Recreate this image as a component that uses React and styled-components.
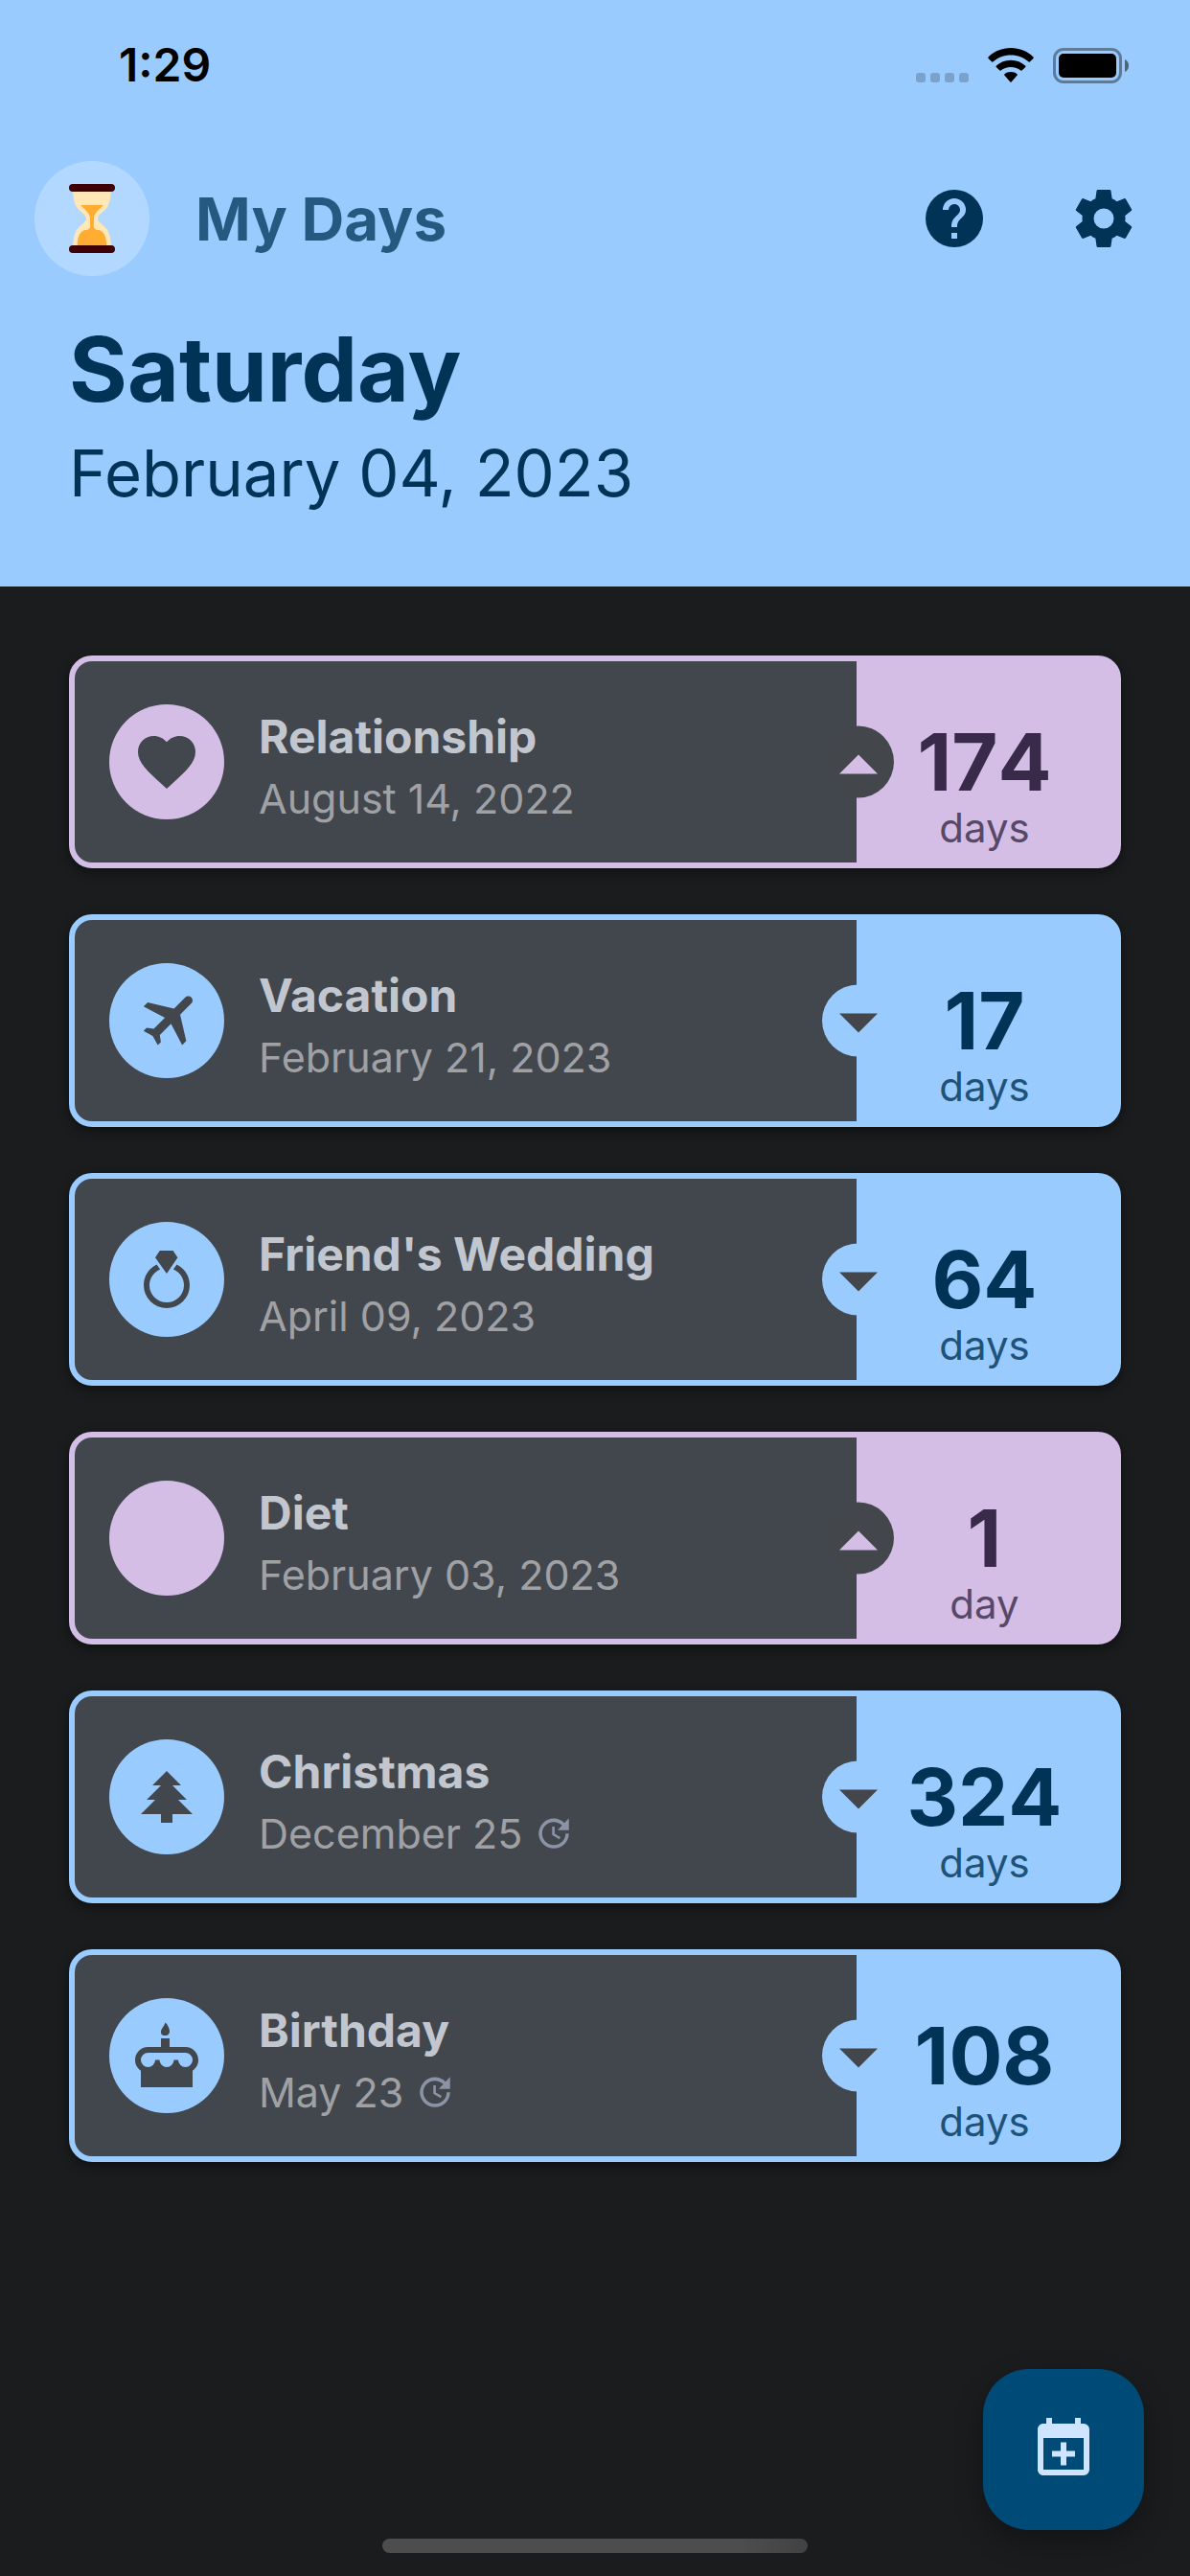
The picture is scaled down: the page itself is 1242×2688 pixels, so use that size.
import React from 'react';
import styled, { createGlobalStyle, css } from 'styled-components';

const colors = {
  background: '#1a1c1e',
  surface: '#42474e',
  notch: '#43474b',
  title: '#c2c7cf',
  muted: '#a0a1a4',
  repeat: '#8a94a6',
  fab: '#004a77',
  onFab: '#cfe4ff',
};

const tones = {
  future: { main: '#99cbff', strong: '#003355', soft: '#1f5278' },
  past: { main: '#d4bee6', strong: '#392a49', soft: '#584868' },
};

const paths = {
  help: 'M15.07,11.25L14.17,12.17C13.45,12.89 13,13.5 13,15H11V14.5C11,13.39 11.45,12.39 12.17,11.67L13.41,10.41C13.78,10.05 14,9.55 14,9C14,7.89 13.1,7 12,7A2,2 0 0,0 10,9H8A4,4 0 0,1 12,5A4,4 0 0,1 16,9C16,9.88 15.64,10.67 15.07,11.25M13,19H11V17H13M12,2A10,10 0 0,0 2,12A10,10 0 0,0 12,22A10,10 0 0,0 22,12C22,6.47 17.5,2 12,2Z',
  cog: 'M12,15.5A3.5,3.5 0 0,1 8.5,12A3.5,3.5 0 0,1 12,8.5A3.5,3.5 0 0,1 15.5,12A3.5,3.5 0 0,1 12,15.5M19.43,12.97C19.47,12.65 19.5,12.33 19.5,12C19.5,11.67 19.47,11.34 19.43,11L21.54,9.37C21.73,9.22 21.78,8.95 21.66,8.73L19.66,5.27C19.54,5.05 19.27,4.96 19.05,5.05L16.56,6.05C16.04,5.66 15.5,5.32 14.87,5.07L14.5,2.42C14.46,2.18 14.25,2 14,2H10C9.75,2 9.54,2.18 9.5,2.42L9.13,5.07C8.5,5.32 7.96,5.66 7.44,6.05L4.95,5.05C4.73,4.96 4.46,5.05 4.34,5.27L2.34,8.73C2.21,8.95 2.27,9.22 2.46,9.37L4.57,11C4.53,11.34 4.5,11.67 4.5,12C4.5,12.33 4.53,12.65 4.57,12.97L2.46,14.63C2.27,14.78 2.21,15.05 2.34,15.27L4.34,18.73C4.46,18.95 4.73,19.03 4.95,18.95L7.44,17.94C7.96,18.34 8.5,18.68 9.13,18.93L9.5,21.58C9.54,21.82 9.75,22 10,22H14C14.25,22 14.46,21.82 14.5,21.58L14.87,18.93C15.5,18.67 16.04,18.34 16.56,17.94L19.05,18.95C19.27,19.03 19.54,18.95 19.66,18.73L21.66,15.27C21.78,15.05 21.73,14.78 21.54,14.63L19.43,12.97Z',
  heart: 'M12,21.35L10.55,20.03C5.4,15.36 2,12.27 2,8.5C2,5.41 4.42,3 7.5,3C9.24,3 10.91,3.81 12,5.08C13.09,3.81 14.76,3 16.5,3C19.58,3 22,5.41 22,8.5C22,12.27 18.6,15.36 13.45,20.03L12,21.35Z',
  airplane: 'M20.56 3.91C21.15 4.5 21.15 5.45 20.56 6.03L16.67 9.92L18.79 19.11L17.38 20.53L13.5 13.1L9.6 17L9.96 19.47L8.89 20.53L7.13 17.35L3.94 15.58L5 14.5L7.5 14.87L11.37 11L3.94 7.09L5.36 5.68L14.55 7.8L18.44 3.91C19 3.33 20 3.33 20.56 3.91Z',
  ring: 'M12,10L8,4.4L9.6,2H14.2L15.8,4.4L12,10M15.5,6.8L14.3,8.5C16.5,9.4 18,11.5 18,14A6,6 0 0,1 12,20A6,6 0 0,1 6,14C6,11.5 7.6,9.4 9.7,8.5L8.5,6.8C5.8,8.1 4,10.8 4,14A8,8 0 0,0 12,22A8,8 0 0,0 20,14C20,10.8 18.2,8.1 15.5,6.8Z',
  tree: 'M10,21V18H3L8,13H5L10,8H7L12,3L17,8H14L19,13H16L21,18H14V21H10Z',
  cake: 'M11.5,0.5C12,0.75 13,2.4 13,3.5C13,4.6 12.33,5 11.5,5C10.67,5 10,4.85 10,3.75C10,2.65 11,2 11.5,0.5M18.5,9C21,9 23,11 23,13.5C23,15.06 22.21,16.43 21,17.24V23H12L3,23V17.24C1.79,16.43 1,15.06 1,13.5C1,11 3,9 5.5,9H10V6H13V9H18.5M12,16A2.5,2.5 0 0,0 14.5,13.5H16A2.5,2.5 0 0,0 18.5,16A2.5,2.5 0 0,0 21,13.5A2.5,2.5 0 0,0 18.5,11H5.5A2.5,2.5 0 0,0 3,13.5A2.5,2.5 0 0,0 5.5,16A2.5,2.5 0 0,0 8,13.5H9.5A2.5,2.5 0 0,0 12,16Z',
  update: 'M21,10.12H14.22L16.96,7.3C14.23,4.6 9.81,4.5 7.08,7.2C4.35,9.91 4.35,14.28 7.08,17C9.81,19.7 14.23,19.7 16.96,17C18.32,15.65 19,14.08 19,12.1H21C21,14.08 20.12,16.65 18.36,18.39C14.85,21.87 9.15,21.87 5.64,18.39C2.14,14.92 2.11,9.28 5.62,5.81C9.13,2.34 14.76,2.34 18.27,5.81L21,3V10.12M12.5,8V12.25L16,14.33L15.28,15.54L11,13V8H12.5Z',
  menuUp: 'M7,15L12,10L17,15H7Z',
  menuDown: 'M7,10L12,15L17,10H7Z',
  calendarPlus: 'M19,19V8H5V19M16,1H18V3H19A2,2 0 0,1 21,5V19A2,2 0 0,1 19,21H5C3.89,21 3,20.1 3,19V5C3,3.89 3.89,3 5,3H6V1H8V3H16V1M11,9.5H13V12.5H16V14.5H13V17.5H11V14.5H8V12.5H11V9.5Z',
};

const events = [
  { title: 'Relationship', date: 'August 14, 2022', count: 174, tone: 'past', icon: 'heart' },
  { title: 'Vacation', date: 'February 21, 2023', count: 17, tone: 'future', icon: 'airplane' },
  { title: "Friend's Wedding", date: 'April 09, 2023', count: 64, tone: 'future', icon: 'ring' },
  { title: 'Diet', date: 'February 03, 2023', count: 1, tone: 'past' },
  { title: 'Christmas', date: 'December 25', count: 324, tone: 'future', icon: 'tree', yearly: true },
  { title: 'Birthday', date: 'May 23', count: 108, tone: 'future', icon: 'cake', yearly: true },
];

const GlobalStyle = createGlobalStyle`
  *, *::before, *::after { box-sizing: border-box; }
  body {
    margin: 0;
    background: ${colors.background};
    font-family: Inter, "Liberation Sans", sans-serif;
  }
  h1, h2, p, ul { margin: 0; padding: 0; }
  button { font: inherit; color: inherit; border: 0; padding: 0; background: none; cursor: pointer; }
`;

const Screen = styled.div`
  position: relative;
  min-height: 100vh;
  display: flex;
  flex-direction: column;
`;

const Header = styled.header`
  background: ${tones.future.main};
  color: ${tones.future.strong};
`;

const StatusBar = styled.div`
  display: flex;
  align-items: center;
  justify-content: space-between;
  height: 132px;
  padding: 4px 64px 0 124px;
  color: #000;
`;

const Clock = styled.time`
  font-size: 48px;
  line-height: 60px;
  font-weight: 600;
`;

const StatusIcons = styled.div`
  display: flex;
  align-items: center;
  gap: 20px;
`;

const Signal = styled.div`
  display: flex;
  align-items: flex-end;
  gap: 5px;
  height: 36px;
`;

const SignalDot = styled.span`
  width: 10px;
  height: 10px;
  border-radius: 3px;
  background: rgba(0, 0, 0, 0.2);
`;

const AppBar = styled.div`
  display: flex;
  align-items: center;
  height: 192px;
  padding: 0 30px 0 36px;
`;

const Avatar = styled.div`
  display: grid;
  place-items: center;
  width: 120px;
  height: 120px;
  border-radius: 50%;
  background: rgba(255, 255, 255, 0.25);
`;

const AppTitle = styled.h1`
  flex: 1;
  padding: 2px 0 0 48px;
  font-size: 62px;
  line-height: 84px;
  font-weight: 700;
  opacity: 0.75;
`;

const Actions = styled.div`
  display: flex;
  gap: 36px;
`;

const IconButton = styled.button`
  display: grid;
  place-items: center;
  width: 120px;
  height: 120px;
  border-radius: 50%;
`;

const Today = styled.div`
  padding: 0 72px 70px;
`;

const Weekday = styled.h2`
  font-size: 93px;
  line-height: 122px;
  font-weight: 700;
`;

const TodayDate = styled.p`
  font-size: 67px;
  line-height: 96px;
`;

const Main = styled.main`
  flex: 1;
  padding: 72px;
`;

const EventList = styled.ul`
  display: flex;
  flex-direction: column;
  gap: 48px;
  list-style: none;
`;

const Card = styled.button`
  display: flex;
  width: 100%;
  height: 222px;
  border: 6px solid ${(p) => tones[p.$tone].main};
  border-radius: 24px;
  background: ${(p) => tones[p.$tone].main};
  text-align: left;
  box-shadow: 0 4px 12px rgba(0, 0, 0, 0.45);
`;

const Details = styled.span`
  flex: 1;
  align-self: stretch;
  display: flex;
  align-items: center;
  gap: 36px;
  padding-left: 36px;
  border-radius: 18px 0 0 18px;
  background: ${colors.surface};
`;

const Badge = styled.span`
  display: grid;
  place-items: center;
  width: 120px;
  height: 120px;
  border-radius: 50%;
  background: ${(p) => tones[p.$tone].main};
  color: ${colors.surface};
`;

const Labels = styled.span`
  display: flex;
  flex-direction: column;
  gap: 1px;
  padding-top: 9px;
`;

const EventTitle = styled.span`
  font-size: 48px;
  line-height: 66px;
  font-weight: 700;
  color: ${colors.title};
`;

const EventDate = styled.span`
  display: flex;
  align-items: center;
  gap: 12px;
  font-size: 43px;
  line-height: 60px;
  color: ${colors.muted};
`;

const Counter = styled.span`
  position: relative;
  align-self: stretch;
  display: flex;
  flex-direction: column;
  align-items: center;
  justify-content: flex-end;
  width: 270px;
  padding: 0 3px 12px 0;
`;

const Notch = styled.span`
  position: absolute;
  left: -36px;
  top: 50%;
  display: grid;
  place-content: center;
  width: 75px;
  height: 75px;
  border-radius: 50%;
  transform: translateY(-50%);
  ${(p) =>
    p.$tone === 'past'
      ? css`
          background: ${colors.notch};
          color: ${tones.past.main};
        `
      : css`
          background: ${tones.future.main};
          color: ${colors.notch};
        `}
`;

const Count = styled.span`
  font-size: 83px;
  line-height: 90px;
  font-weight: 700;
  font-kerning: none;
  color: ${(p) => tones[p.$tone].strong};
`;

const Unit = styled.span`
  font-size: 42px;
  line-height: 48px;
  color: ${(p) => tones[p.$tone].soft};
`;

const AddButton = styled.button`
  position: fixed;
  right: 48px;
  bottom: 48px;
  display: grid;
  place-items: center;
  width: 168px;
  height: 168px;
  border-radius: 48px;
  background: ${colors.fab};
  color: ${colors.onFab};
  box-shadow: 0 12px 30px rgba(0, 0, 0, 0.3);
`;

const Footer = styled.footer`
  display: flex;
  justify-content: center;
  padding-bottom: 24px;
`;

const HomeIndicator = styled.div`
  width: 444px;
  height: 15px;
  border-radius: 8px;
  background: linear-gradient(90deg, #4d4d4d 84%, #424242);
`;

const Glyph = styled.svg`
  display: block;
  flex: none;
  width: ${(p) => p.$size}px;
  height: ${(p) => p.$size}px;
  fill: currentColor;
`;

const Repeat = styled(Glyph)`
  color: ${colors.repeat};
`;

function Icon({ name, size = 72, as: Shape = Glyph }) {
  return (
    <Shape $size={size} viewBox="0 0 24 24" aria-hidden="true">
      <path d={paths[name]} />
    </Shape>
  );
}

function Hourglass() {
  return (
    <svg width="72" height="72" viewBox="0 0 36 36" aria-hidden="true">
      <path fill="#ffe8b6" d="M21 18c0-2.001 3.246-3.369 5-6 2-3 2-10 2-10H8s0 7 2 10c1.754 2.631 5 3.999 5 6s-3.246 3.369-5 6c-2 3-2 10-2 10h20s0-7-2-10c-1.754-2.631-5-3.999-5-6z" />
      <path fill="#ffac33" d="M20.999 24c-.999 0-2.057-1-2.057-2C19 20.287 19 19.154 19 18c0-3.22 3.034-4.561 4.9-7H12.1c1.865 2.439 4.9 3.78 4.9 7 0 1.155 0 2.289.058 4 0 1-1.058 2-2.058 2-3 0-4.6 3.4-4.6 8h15.2c0-4.600-1.600-8-4.601-8z" />
      <path fill="#3e0004" d="M30 34a2 2 0 0 1-2 2H8a2 2 0 0 1 0-4h20a2 2 0 0 1 2 2zm0-32a2 2 0 0 1-2 2H8a2 2 0 0 1 0-4h20a2 2 0 0 1 2 2z" />
    </svg>
  );
}

function Wifi() {
  return (
    <svg width="48" height="36" viewBox="0 0 48 36" aria-hidden="true">
      <path d="M24 0C33 0 41.500 3.500 47.500 9.500Q48 10.200 47.500 10.900L43.800 14.600Q43.300 15 42.700 14.600C37.500 10 31 7.500 24 7.500S10.500 10 5.300 14.600Q4.700 15 4.200 14.600L.5 10.900Q0 10.200 .5 9.500C6.500 3.500 15 0 24 0Z" />
      <path d="M24 12.800C29.900 12.800 35.200 15 39.300 18.700Q39.800 19.300 39.300 19.900L35.500 23.600Q35 24 34.400 23.600C31.500 21.200 28 19.900 24 19.900S16.500 21.200 13.600 23.600Q13 24 12.500 23.600L8.700 19.900Q8.200 19.300 8.700 18.700C12.800 15 18.100 12.800 24 12.800Z" />
      <path d="M24 25C26.600 25 28.900 25.800 30.700 27.400Q31.200 28 30.700 28.600L24.600 35.400Q24 36 23.400 35.400L17.300 28.600Q16.800 28 17.300 27.400C19.100 25.800 21.400 25 24 25Z" />
    </svg>
  );
}

function Battery() {
  return (
    <svg width="79" height="37" viewBox="0 0 79 37" aria-hidden="true">
      <rect x="1.500" y="1.500" width="69" height="34" rx="9.500" fill="none" stroke="#000" strokeOpacity="0.400" strokeWidth="3" />
      <rect x="6" y="6" width="60" height="25" rx="5" />
      <path d="M75 12C77.500 13 79 15.500 79 18.500S77.500 24 75 25Z" fillOpacity="0.500" />
    </svg>
  );
}

function EventCard({ event }) {
  const { title, date, count, tone, icon, yearly } = event;
  return (
    <Card type="button" $tone={tone}>
      <Details>
        <Badge $tone={tone}>{icon && <Icon name={icon} />}</Badge>
        <Labels>
          <EventTitle>{title}</EventTitle>
          <EventDate>
            {date}
            {yearly && <Icon name="update" size={42} as={Repeat} />}
          </EventDate>
        </Labels>
      </Details>
      <Counter>
        <Notch $tone={tone}>
          <Icon name={tone === 'past' ? 'menuUp' : 'menuDown'} size={96} />
        </Notch>
        <Count $tone={tone}>{count}</Count>
        <Unit $tone={tone}>{count === 1 ? 'day' : 'days'}</Unit>
      </Counter>
    </Card>
  );
}

export default function App() {
  return (
    <Screen>
      <GlobalStyle />
      <Header>
        <StatusBar>
          <Clock>1:29</Clock>
          <StatusIcons>
            <Signal>
              <SignalDot />
              <SignalDot />
              <SignalDot />
              <SignalDot />
            </Signal>
            <Wifi />
            <Battery />
          </StatusIcons>
        </StatusBar>
        <AppBar>
          <Avatar>
            <Hourglass />
          </Avatar>
          <AppTitle>My Days</AppTitle>
          <Actions>
            <IconButton type="button" aria-label="Help">
              <Icon name="help" />
            </IconButton>
            <IconButton type="button" aria-label="Settings">
              <Icon name="cog" />
            </IconButton>
          </Actions>
        </AppBar>
        <Today>
          <Weekday>Saturday</Weekday>
          <TodayDate>February 04, 2023</TodayDate>
        </Today>
      </Header>
      <Main>
        <EventList>
          {events.map((event) => (
            <li key={event.title}>
              <EventCard event={event} />
            </li>
          ))}
        </EventList>
      </Main>
      <AddButton type="button" aria-label="Add event">
        <Icon name="calendarPlus" />
      </AddButton>
      <Footer>
        <HomeIndicator />
      </Footer>
    </Screen>
  );
}
